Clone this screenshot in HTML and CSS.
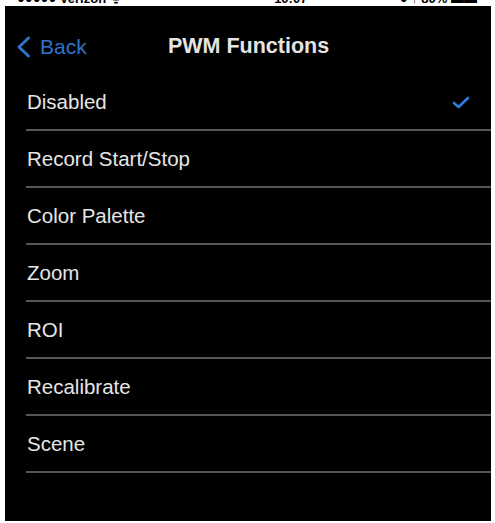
FILE: index.html
```html
<!DOCTYPE html>
<html>
<head>
<meta charset="utf-8">
<link rel="stylesheet" href="styles.css">
</head>
<body>
<div class="status">
  <span class="st st-left">●●●●● Verizon ᯤ</span>
  <span class="st st-mid">10:07</span>
  <span class="st st-right">● ↑ 80% ▬▬</span>
</div>
<div class="screen">
  <div class="nav">
    <div class="back">
      <svg class="chev" width="15" height="22" viewBox="0 0 15 22"><path d="M12.5 2 L3 11 L12.5 20" fill="none" stroke="#2f74c8" stroke-width="3" stroke-linecap="round" stroke-linejoin="round"/></svg>
      <span class="back-txt">Back</span>
    </div>
    <div class="title">PWM Functions</div>
    <div></div>
  </div>
  <div class="list">
    <div class="row"><span>Disabled</span>
      <svg class="check" width="18" height="13" viewBox="0 0 18 13"><path d="M2 7 L6.5 11 L16 2" fill="none" stroke="#2b7fe0" stroke-width="2.6" stroke-linecap="round" stroke-linejoin="round"/></svg>
    </div>
    <div class="row"><span>Record Start/Stop</span></div>
    <div class="row"><span>Color Palette</span></div>
    <div class="row"><span>Zoom</span></div>
    <div class="row"><span>ROI</span></div>
    <div class="row"><span>Recalibrate</span></div>
    <div class="row"><span>Scene</span></div>
  </div>
</div>
</body>
</html>
```

FILE: styles.css
```css
html, body {
  margin: 0;
  padding: 0;
  background: #fff;
}
body {
  font-family: "Liberation Sans", Arial, sans-serif;
  width: 495px;
  height: 523px;
  overflow: hidden;
}
.status {
  height: 6px;
  overflow: hidden;
  margin-left: 5px;
  width: 486px;
  display: flex;
  justify-content: space-between;
  font-size: 13px;
  font-weight: 700;
  color: #000;
  line-height: 13px;
}
.st {
  display: block;
  margin-top: -8px;
}
.st-left { margin-left: 12px; }
.st-mid { margin-left: 60px; }
.st-right { margin-right: 14px; }
.screen {
  margin-left: 5px;
  width: 486px;
  height: 515px;
  background: #000;
}
.nav {
  height: 68px;
  box-sizing: border-box;
  padding-top: 18px;
  display: grid;
  grid-template-columns: 1fr auto 1fr;
  align-items: start;
}
.back {
  display: flex;
  align-items: center;
  height: 45px;
  padding-left: 11px;
  gap: 9px;
  color: #2f74c8;
  font-size: 21px;
}
.chev { display: block; margin-top: 1px; }
.title {
  height: 45px;
  line-height: 45px;
  color: #e4e4e4;
  font-size: 21.5px;
  font-weight: 700;
  padding-left: 1px;
}
.list {
  display: flex;
  flex-direction: column;
}
.row {
  height: 57px;
  box-sizing: border-box;
  margin-left: 21px;
  padding-left: 1px;
  padding-right: 21px;
  border-bottom: 2px solid #565656;
  display: flex;
  align-items: center;
  justify-content: space-between;
  color: #e6e6e6;
  font-size: 20.5px;
}
.check { display: block; margin-top: 1px; }
```
